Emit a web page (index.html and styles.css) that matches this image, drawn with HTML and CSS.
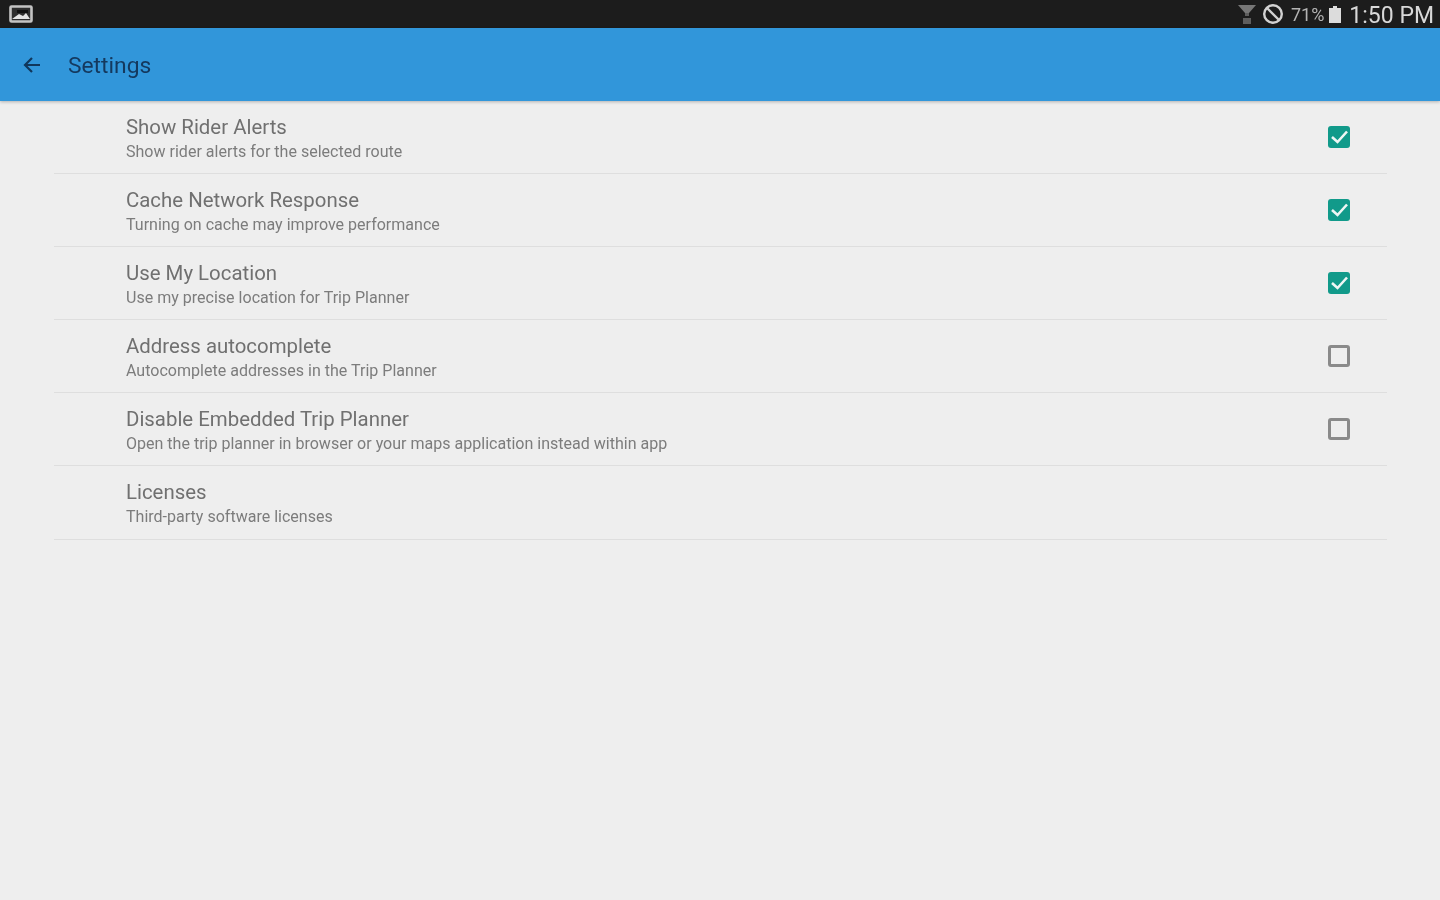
FILE: index.html
```html
<!DOCTYPE html>
<html lang="en">

<head>
    <meta charset="UTF-8">
    <meta name="viewport" content="width=device-width, initial-scale=1.0">
    <title>Settings</title>
    <link rel="stylesheet" href="styles.css">
</head>

<body>
    <div class="status-bar">
        <svg class="status-pic" width="24" height="18" viewBox="0 0 24 18">
            <rect x="1.5" y="1.5" width="21" height="15" rx="1" fill="#2e2e2e" stroke="#c4c4c4" stroke-width="2.6"/>
            <path d="M3 14 L10 9 L14 11 L17 8 L21 14 Z" fill="#e4e4e4"/>
            <rect x="8" y="5" width="11" height="3" fill="#111"/>
        </svg>
        <div class="status-right">
            <svg class="signal" width="18" height="20" viewBox="0 0 18 20">
                <path d="M0 1 H18 L11 9 H7 Z" fill="#777"/>
                <path d="M7 9 H11 V12 H7 Z M5 14 H13 V20 H5 Z" fill="#5e5e5e"/>
            </svg>
            <svg class="ban" width="22" height="22" viewBox="0 0 22 22">
                <circle cx="11" cy="11" r="8.8" fill="none" stroke="#d2d2d2" stroke-width="2.4"/>
                <path d="M5 5 L17 17" stroke="#d2d2d2" stroke-width="2.4"/>
            </svg>
            <span class="battery-pct">71%</span>
            <svg class="battery" width="12" height="17" viewBox="0 0 12 17">
                <path d="M4 0 H8 V2 H12 V17 H0 V2 H4 Z" fill="#dcdcdc"/>
            </svg>
            <span class="clock">1:50 PM</span>
        </div>
    </div>

    <header class="app-bar">
        <svg class="back" width="20" height="20" viewBox="0 0 20 20">
            <path d="M18 10 H3 M10 3 L3 10 L10 17" fill="none" stroke="#10375c" stroke-width="2.2"/>
        </svg>
        <h1>Settings</h1>
    </header>

    <ul class="settings">
        <li class="row">
            <div class="row-text">
                <div class="row-title">Show Rider Alerts</div>
                <div class="row-sub">Show rider alerts for the selected route</div>
            </div>
            <span class="box checked">
                <svg width="22" height="22" viewBox="0 0 22 22"><path d="M4 11 L9.5 16 L19 5.5" fill="none" stroke="#eef6f4" stroke-width="2.6"/></svg>
            </span>
        </li>
        <li class="row">
            <div class="row-text">
                <div class="row-title">Cache Network Response</div>
                <div class="row-sub">Turning on cache may improve performance</div>
            </div>
            <span class="box checked">
                <svg width="22" height="22" viewBox="0 0 22 22"><path d="M4 11 L9.5 16 L19 5.5" fill="none" stroke="#eef6f4" stroke-width="2.6"/></svg>
            </span>
        </li>
        <li class="row">
            <div class="row-text">
                <div class="row-title">Use My Location</div>
                <div class="row-sub">Use my precise location for Trip Planner</div>
            </div>
            <span class="box checked">
                <svg width="22" height="22" viewBox="0 0 22 22"><path d="M4 11 L9.5 16 L19 5.5" fill="none" stroke="#eef6f4" stroke-width="2.6"/></svg>
            </span>
        </li>
        <li class="row">
            <div class="row-text">
                <div class="row-title">Address autocomplete</div>
                <div class="row-sub">Autocomplete addresses in the Trip Planner</div>
            </div>
            <span class="box"></span>
        </li>
        <li class="row">
            <div class="row-text">
                <div class="row-title">Disable Embedded Trip Planner</div>
                <div class="row-sub">Open the trip planner in browser or your maps application instead within app</div>
            </div>
            <span class="box"></span>
        </li>
        <li class="row">
            <div class="row-text">
                <div class="row-title">Licenses</div>
                <div class="row-sub">Third-party software licenses</div>
            </div>
        </li>
    </ul>
</body>

</html>
```

FILE: styles.css
```css
body {
    font-family: Roboto, "Liberation Sans", sans-serif;
    background-color: #eeeeee;
    margin: 0;
    padding: 0;
    height: 900px;
    overflow: hidden;
}

/* the reference is a soft, upscaled capture */
.status-pic,
.status-right,
.back,
.app-bar h1,
.row-text,
.box {
    filter: blur(0.7px);
}

.status-bar {
    height: 28px;
    background-color: #1c1c1c;
    display: flex;
    align-items: center;
    justify-content: space-between;
    padding: 0 6px 0 9px;
    color: #d8d8d8;
}

.status-pic {
    display: block;
}

.status-right {
    display: flex;
    align-items: center;
}

.status-right svg {
    display: block;
}

.ban {
    margin-left: 6px;
}

.battery-pct {
    font-size: 18px;
    color: #b4b4b4;
    margin-left: 7px;
    margin-right: 5px;
}

.clock {
    font-size: 23px;
    margin-left: 8px;
    margin-top: 2px;
}

.app-bar {
    height: 73px;
    background-color: #3196da;
    display: flex;
    align-items: center;
    padding-left: 22px;
    box-shadow: 0 1px 3px rgba(0, 0, 0, 0.25);
}

.app-bar h1 {
    margin: 1px 0 0 26px;
    font-size: 22.8px;
    font-weight: 400;
    color: #14395e;
}

.settings {
    list-style: none;
    margin: 0 53px 0 54px;
    padding: 0;
}

.row {
    height: 71px;
    border-bottom: 1px solid #dedede;
    display: flex;
    align-items: center;
    justify-content: space-between;
    padding: 1px 37px 0 72px;
}

.row:last-child {
    padding-bottom: 1px;
}

.row-title {
    font-size: 20.4px;
    line-height: 26px;
    color: #707070;
}

.row-sub {
    font-size: 16.05px;
    line-height: 21px;
    margin-top: 1px;
    color: #7c7c7c;
}

.box {
    width: 22px;
    height: 22px;
    box-sizing: border-box;
    border: 3px solid #8a8a8a;
    border-radius: 3px;
    margin-bottom: 1px;
}

.box.checked {
    border: none;
    background-color: #119a8a;
}

.box svg {
    display: block;
}
```
